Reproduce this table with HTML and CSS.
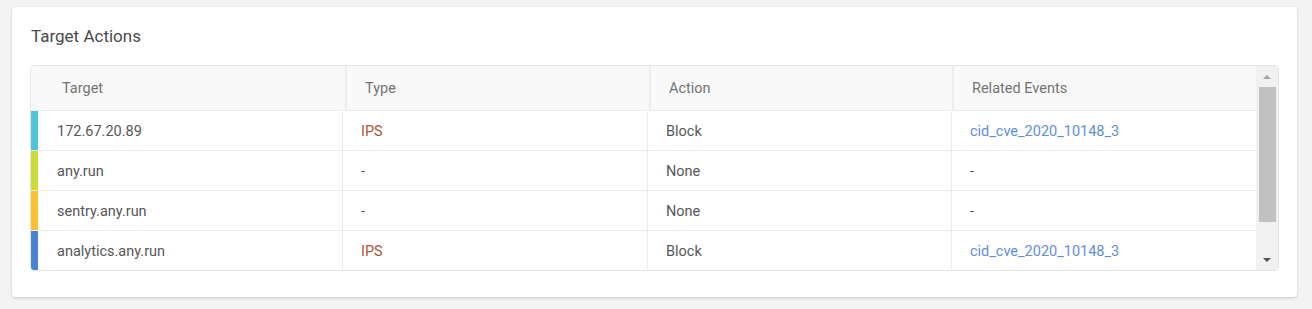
FILE: index.html
```html
<!DOCTYPE html>
<html lang="en">
<head>
<meta charset="utf-8">
<title>Target Actions</title>
<link rel="stylesheet" href="styles.css">
</head>
<body>
<section class="card">
  <h2 class="card-title">Target Actions</h2>
  <div class="table">
    <div class="table-main">
      <div class="row head">
        <div class="hcell first">Target</div>
        <div class="hcell">Type</div>
        <div class="hcell">Action</div>
        <div class="hcell last">Related Events</div>
      </div>
      <div class="row body">
        <div class="bar cyan"></div>
        <div class="cell">172.67.20.89</div>
        <div class="cell ips">IPS</div>
        <div class="cell">Block</div>
        <div class="cell last"><a class="link" href="#">cid_cve_2020_10148_3</a></div>
      </div>
      <div class="row body">
        <div class="bar lime"></div>
        <div class="cell">any.run</div>
        <div class="cell">-</div>
        <div class="cell">None</div>
        <div class="cell last">-</div>
      </div>
      <div class="row body">
        <div class="bar amber"></div>
        <div class="cell">sentry.any.run</div>
        <div class="cell">-</div>
        <div class="cell">None</div>
        <div class="cell last">-</div>
      </div>
      <div class="row body lastrow">
        <div class="bar blue"></div>
        <div class="cell">analytics.any.run</div>
        <div class="cell ips">IPS</div>
        <div class="cell">Block</div>
        <div class="cell last"><a class="link" href="#">cid_cve_2020_10148_3</a></div>
      </div>
    </div>
    <div class="scrollbar">
      <div class="sb-btn up"><span class="arrow-up"></span></div>
      <div class="sb-thumb"></div>
      <div class="sb-space"></div>
      <div class="sb-btn down"><span class="arrow-down"></span></div>
    </div>
  </div>
</section>
</body>
</html>
```
FILE: styles.css
```css
* { box-sizing: border-box; }
html, body { height: 100%; }
body {
  margin: 0;
  background: #f3f3f3;
  padding: 7px 15px 0 12px;
  font-family: Roboto, "Liberation Sans", Arial, sans-serif;
  color: #444;
}
.card {
  background: #fff;
  border-radius: 4px;
  box-shadow: 0 1px 3px rgba(0,0,0,0.18);
  padding: 19px 18px 26px 18px;
  height: 290px;
}
.card-title {
  margin: 0 0 19px 1px;
  font-size: 17px;
  font-weight: 400;
  line-height: 20px;
  color: #4a4a4a;
}
.table {
  display: flex;
  border: 1px solid #e6e6e6;
  border-radius: 4px;
  overflow: hidden;
  height: 206px;
}
.table-main {
  flex: 1;
  display: flex;
  flex-direction: column;
}
.row {
  display: grid;
  align-items: stretch;
}
.row.head {
  grid-template-columns: 316px 304px 303px 1fr;
  height: 45px;
  background: #f9f9f9;
  border-bottom: 1px solid #ebebeb;
}
.hcell {
  display: flex;
  align-items: center;
  padding-left: 18px;
  padding-top: 1px;
  font-size: 14.5px;
  color: #737373;
  border-right: 2px solid #ededed;
}
.hcell.first { padding-left: 31px; }
.hcell.last { border-right: none; }
.row.body {
  grid-template-columns: 7px 305px 305px 304px 1fr;
  height: 40px;
  border-bottom: 1px solid #ececec;
}
.row.body.lastrow { border-bottom: none; height: 39px; }
.bar { height: 100%; }
.bar.cyan { background: #4fc3d9; }
.bar.lime { background: #cddc39; }
.bar.amber { background: #fbc02d; }
.bar.blue { background: #4a83d5; }
.cell {
  display: flex;
  align-items: center;
  padding-left: 18px;
  padding-top: 1px;
  font-size: 14.5px;
  color: #575757;
  border-right: 1px solid #ececec;
}
.cell:nth-child(2) { padding-left: 19px; }
.cell.last { border-right: none; }
.cell.ips { color: #ab5535; }
.link { color: #5f8fd9; text-decoration: none; }
.scrollbar {
  width: 22px;
  background: #f1f1f1;
  display: flex;
  flex-direction: column;
  align-items: center;
}
.sb-btn {
  display: flex;
  align-items: center;
  justify-content: center;
  width: 100%;
}
.sb-btn.up { height: 21px; }
.sb-btn.down { height: 21px; }
.arrow-up {
  width: 0; height: 0;
  border-left: 4px solid transparent;
  border-right: 4px solid transparent;
  border-bottom: 4px solid #a3a3a3;
}
.arrow-down {
  width: 0; height: 0;
  border-left: 4px solid transparent;
  border-right: 4px solid transparent;
  border-top: 4px solid #505050;
}
.sb-thumb {
  width: 17px;
  height: 135px;
  background: #c1c1c1;
}
.sb-space { flex: 1; }
```
